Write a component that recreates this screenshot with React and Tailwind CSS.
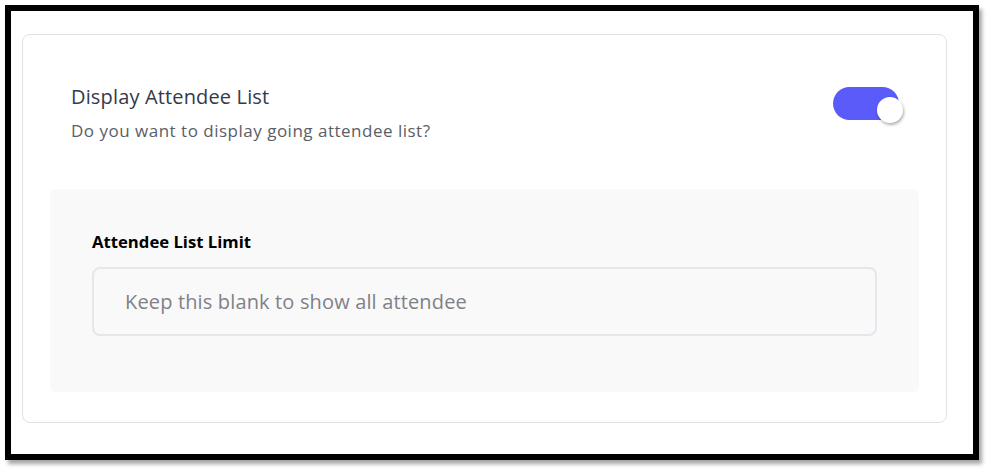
import { useState } from "react";

export default function App() {
  const [enabled, setEnabled] = useState(true);

  return (
    <div className="min-h-screen bg-white" style={{ fontFamily: '"Open Sans", "Noto Sans", sans-serif' }}>
      <div className="ml-[5px] pt-[5px]">
        <div className="w-[974px] h-[455px] border-[6px] border-black bg-white shadow-[3px_4px_4px_rgba(0,0,0,0.35)] pl-[11px] pt-[23px]">
          {/* Card */}
          <div className="w-[925px] h-[389px] border border-[#e2e2e4] rounded-[8px] bg-white px-[27px] pt-[48px]">
            <div className="flex items-start justify-between pl-[21px] pr-[20px]">
              <div>
                <h3 className="text-[20px] leading-[28px] tracking-[0.15px] text-[#343a4b]">Display Attendee List</h3>
                <p className="mt-[9px] text-[17px] leading-[22px] tracking-[0.5px] text-[#5a5e66]">
                  Do you want to display going attendee list?
                </p>
              </div>
              <button
                type="button"
                onClick={() => setEnabled(!enabled)}
                className={`relative mt-[4px] w-[66px] h-[33px] rounded-full ${
                  enabled ? "bg-[#5a5bf8]" : "bg-gray-300"
                }`}
              >
                <span
                  className={`absolute top-[10px] w-[26px] h-[26px] rounded-full bg-white shadow-[1px_2px_3px_rgba(0,0,0,0.3)] ${
                    enabled ? "left-[44px]" : "left-[4px]"
                  }`}
                />
              </button>
            </div>

            {/* Limit panel */}
            <div className="mt-[47px] h-[203px] rounded-[6px] bg-[#f9f9fa] px-[42px] pt-[42px]">
              <label className="block text-[16.7px] leading-[22px] font-bold text-black">
                Attendee List Limit
              </label>
              <input
                type="text"
                placeholder="Keep this blank to show all attendee"
                className="mt-[14px] block w-full h-[69px] rounded-[8px] border-2 border-[#e6e6ec] bg-[#f9f9fa] px-[31px] text-[20px] tracking-[0.15px] text-[#333] placeholder:text-[#808187] outline-none"
              />
            </div>
          </div>
        </div>
      </div>
    </div>
  );
}
